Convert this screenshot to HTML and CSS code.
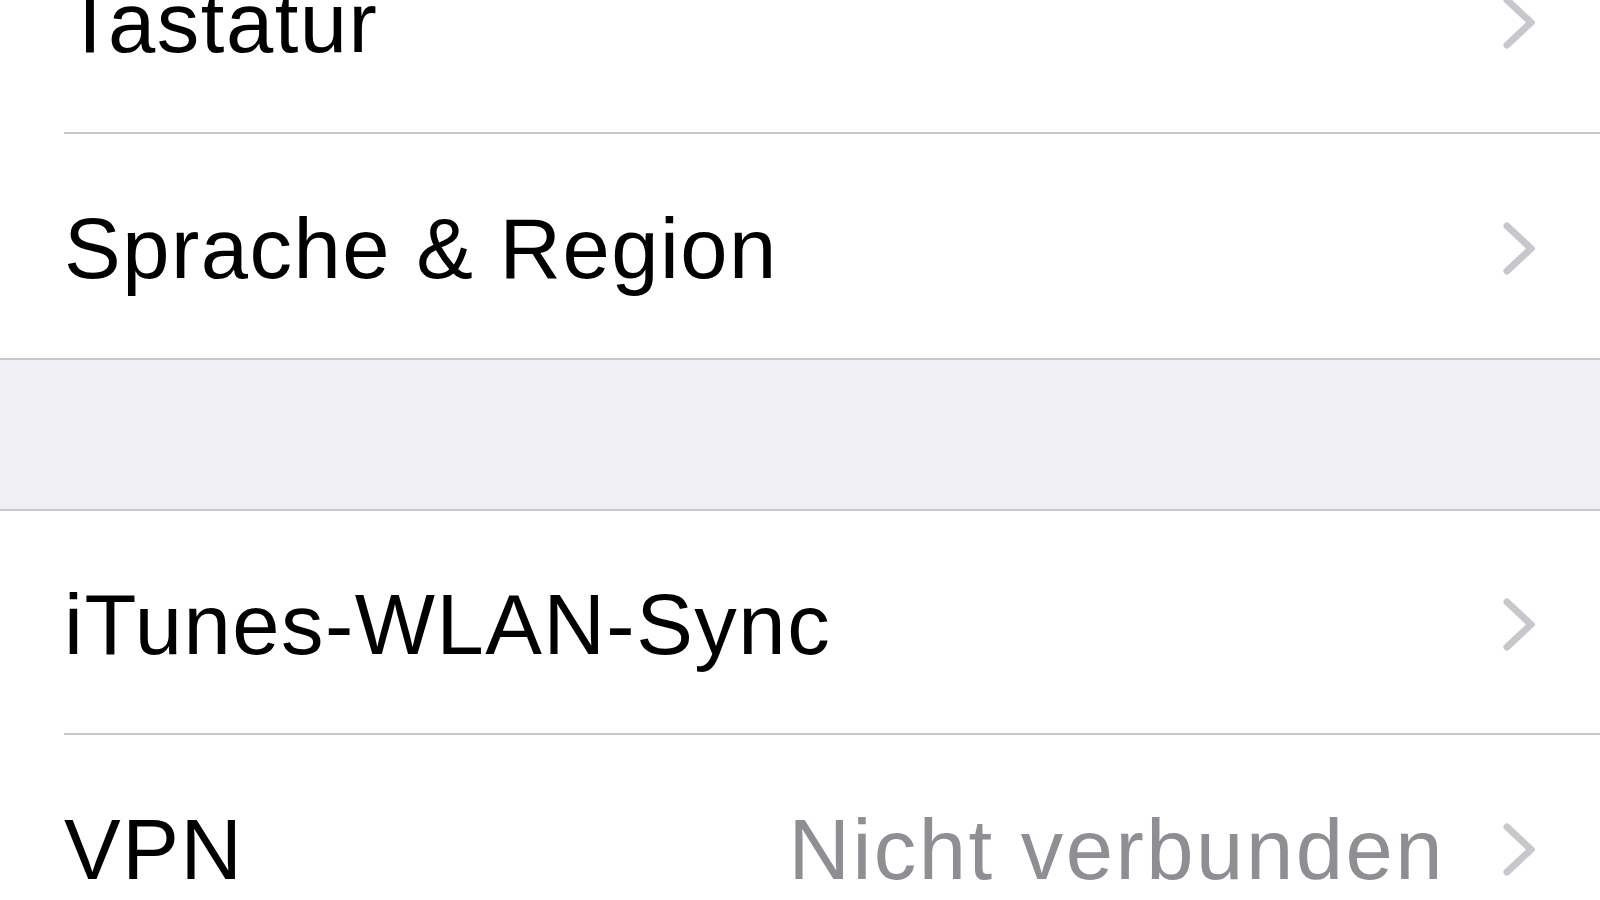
FILE: index.html
```html
<!DOCTYPE html>
<html lang="de">

<head>
  <meta charset="UTF-8" />
  <meta name="viewport" content="width=device-width, initial-scale=1.0" />
  <title>Allgemein</title>
  <link rel="stylesheet" href="styles.css">
</head>

<body>

  <div class="group group-first">
    <div class="row">
      <div class="cell">
        <span class="label">Tastatur</span>
        <svg class="chevron" viewBox="0 0 32 53"><polyline points="4,4 28,26.5 4,49" /></svg>
      </div>
    </div>
    <div class="row">
      <div class="cell">
        <span class="label">Sprache &amp; Region</span>
        <svg class="chevron" viewBox="0 0 32 53"><polyline points="4,4 28,26.5 4,49" /></svg>
      </div>
    </div>
  </div>

  <div class="spacer"></div>

  <div class="group">
    <div class="row">
      <div class="cell cell-short">
        <span class="label">iTunes-WLAN-Sync</span>
        <svg class="chevron" viewBox="0 0 32 53"><polyline points="4,4 28,26.5 4,49" /></svg>
      </div>
    </div>
    <div class="row">
      <div class="cell">
        <span class="label">VPN</span>
        <span class="detail">Nicht verbunden</span>
        <svg class="chevron" viewBox="0 0 32 53"><polyline points="4,4 28,26.5 4,49" /></svg>
      </div>
    </div>
  </div>

</body>

</html>
```

FILE: styles.css
```css
body {
  margin: 0;
  background-color: #efeff4;
  font-family: "Liberation Sans", Arial, sans-serif;
  overflow: hidden;
}

.group {
  background-color: #ffffff;
  border-top: 2px solid #c8c7cc;
  border-bottom: 2px solid #c8c7cc;
}

.group-first {
  margin-top: -94px;
}

.row {
  padding-left: 64px;
}

.cell {
  display: flex;
  align-items: center;
  height: 226px;
  padding-top: 5px;
  padding-right: 65px;
  box-sizing: border-box;
  border-bottom: 2px solid #c8c7cc;
}

.cell-short {
  height: 224px;
}

.row:last-child .cell {
  border-bottom: none;
  height: 224px;
}

.label {
  flex: 1;
  font-size: 85px;
  line-height: 1;
  letter-spacing: 1.5px;
  color: #000000;
  white-space: nowrap;
}

.detail {
  font-size: 85px;
  line-height: 1;
  letter-spacing: 2.5px;
  color: #8e8e93;
  margin-right: 58px;
  white-space: nowrap;
}

.chevron {
  width: 32px;
  height: 53px;
  flex-shrink: 0;
  fill: none;
  stroke: #c7c7cc;
  stroke-width: 7;
  stroke-linecap: round;
  stroke-linejoin: miter;
}

.spacer {
  height: 149px;
}
```
